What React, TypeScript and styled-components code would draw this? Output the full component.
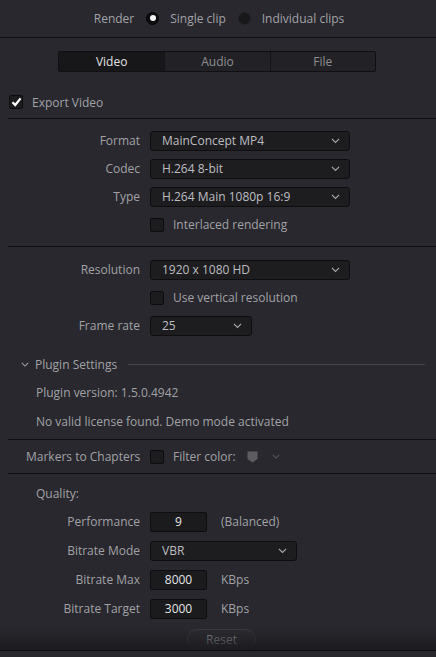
import styled, { createGlobalStyle } from "styled-components";

const GlobalStyle = createGlobalStyle`
  html, body {
    margin: 0;
    padding: 0;
    background: #28282e;
  }
  body {
    font-family: "Open Sans", "Liberation Sans", sans-serif;
    font-size: 12px;
    color: #a2a2a6;
  }
`;

const Page = styled.div`
  width: 436px;
  height: 657px;
  display: flex;
  flex-direction: column;
  overflow: hidden;
`;

const Content = styled.div`
  position: relative;
  height: 650px;
  overflow: hidden;
  display: flex;
  flex-direction: column;
`;

const Shade = styled.div`
  position: absolute;
  left: 0;
  right: 0;
  bottom: 0;
  height: 22px;
  background: linear-gradient(to bottom, rgba(24, 24, 28, 0), rgba(24, 24, 28, 0.85));
  pointer-events: none;
`;

const Footer = styled.div`
  height: 6px;
  border-top: 1px solid #0c0c0e;
  background: #27272c;
`;

const RenderBar = styled.div`
  height: 38px;
  display: flex;
  align-items: center;
  justify-content: center;
  gap: 11px;
  border-bottom: 1px solid #101012;
  padding-left: 2px;
`;

const Radio = styled.span<{ $on?: boolean }>`
  width: 13px;
  height: 13px;
  border-radius: 50%;
  box-sizing: border-box;
  background: ${(p) => (p.$on ? "#0d0d0f" : "#18181b")};
  border: 1px solid ${(p) => (p.$on ? "#050506" : "#222226")};
  display: inline-flex;
  align-items: center;
  justify-content: center;
  margin-left: 1px;
  &::after {
    content: "";
    width: 6px;
    height: 6px;
    border-radius: 50%;
    background: ${(p) => (p.$on ? "#f4f4f4" : "transparent")};
  }
`;

const Tabs = styled.div`
  margin: 13px 0 0 58px;
  width: 318px;
  height: 22px;
  box-sizing: border-box;
  display: grid;
  grid-template-columns: 1fr 1fr 1fr;
  border: 1px solid #101012;
  border-radius: 2px;
  background: #222226;
`;

const Tab = styled.div<{ $active?: boolean }>`
  display: flex;
  align-items: center;
  justify-content: center;
  background: ${(p) => (p.$active ? "#17171a" : "transparent")};
  color: ${(p) => (p.$active ? "#e2e2e4" : "#8e8e92")};
  & + & {
    border-left: 1px solid #151517;
  }
`;

const ExportRow = styled.div`
  margin: 21px 0 0 9px;
  height: 18px;
  display: flex;
  align-items: center;
  gap: 9px;
`;

const Box = styled.span`
  width: 14px;
  height: 14px;
  box-sizing: border-box;
  border: 1px solid #0c0c0d;
  border-radius: 2px;
  background: #1c1c1f;
  display: inline-flex;
  align-items: center;
  justify-content: center;
  flex-shrink: 0;
`;

const Divider = styled.div<{ $mt?: number }>`
  margin: ${(p) => p.$mt ?? 0}px 0 0 8px;
  height: 1px;
  background: #0f0f11;
`;

const FormBlock = styled.div<{ $top: number; $bottom: number; $gap?: number }>`
  display: flex;
  flex-direction: column;
  gap: ${(p) => p.$gap ?? 8}px;
  padding: ${(p) => p.$top}px 0 ${(p) => p.$bottom}px;
`;

const Row = styled.div`
  display: flex;
  align-items: center;
  height: 20px;
`;

const Label = styled.div`
  width: 140px;
  padding-right: 10px;
  text-align: right;
  flex-shrink: 0;
  white-space: nowrap;
`;

const Select = styled.div<{ $w: number }>`
  width: ${(p) => p.$w}px;
  height: 20px;
  box-sizing: border-box;
  display: flex;
  align-items: center;
  justify-content: space-between;
  padding: 0 9px 0 11px;
  background: #1d1d20;
  border: 1px solid #0e0e10;
  border-radius: 3px;
  color: #bdbdc1;
`;

const NumBox = styled.div`
  width: 57px;
  height: 20px;
  box-sizing: border-box;
  display: flex;
  align-items: center;
  justify-content: center;
  background: #1b1b1e;
  border: 1px solid #0e0e10;
  border-radius: 2px;
  color: #e4e4e6;
`;

const Unit = styled.span`
  margin-left: 14px;
`;

const CheckLine = styled.div`
  display: flex;
  align-items: center;
  gap: 9px;
  height: 20px;
  margin-left: 150px;
`;

const PluginHead = styled.div`
  margin: 19px 11px 0 21px;
  height: 20px;
  display: flex;
  align-items: center;
  gap: 6px;
  &::after {
    content: "";
    flex: 1;
    height: 1px;
    margin-left: 5px;
    background: #46464b;
  }
`;

const Note = styled.div<{ $mt: number }>`
  margin: ${(p) => p.$mt}px 0 0 36px;
  height: 20px;
  display: flex;
  align-items: center;
`;

const MarkersRow = styled.div`
  height: 34px;
  display: flex;
  align-items: center;
  padding-left: 26px;
`;

const MarkersLabel = styled.span`
  width: 124px;
`;

const FilterText = styled.span`
  margin-left: 9px;
`;

const Swatch = styled.span`
  margin-left: 11px;
  display: inline-flex;
`;

const SwatchArrow = styled.span`
  margin-left: 14px;
  display: inline-flex;
`;

const ResetButton = styled.div`
  margin: 10px 0 0 187px;
  width: 69px;
  height: 22px;
  box-sizing: border-box;
  border: 1px solid #3a3a3f;
  border-radius: 10px;
  background: #2c2c31;
  display: flex;
  align-items: center;
  justify-content: center;
  color: #8c8c90;
`;

const Chevron = ({ color = "#a9a9ad", size = 9 }: { color?: string; size?: number }) => (
  <svg width={size} height={size * 0.6} viewBox="0 0 10 6">
    <path d="M1 1 L5 5 L9 1" fill="none" stroke={color} strokeWidth="1.3" />
  </svg>
);

const Check = () => (
  <svg width="11" height="10" viewBox="0 0 11 10">
    <path d="M1.5 5.2 L4.2 8 L9.6 1.4" fill="none" stroke="#ffffff" strokeWidth="2.2" />
  </svg>
);

function Dropdown({ value, width }: { value: string; width: number }) {
  return (
    <Select $w={width}>
      <span>{value}</span>
      <Chevron />
    </Select>
  );
}

export default function App() {
  return (
    <Page>
      <GlobalStyle />
      <Content>
        <RenderBar>
          <span>Render</span>
          <Radio $on />
          <span>Single clip</span>
          <Radio />
          <span>Individual clips</span>
        </RenderBar>

        <Tabs>
          <Tab $active>Video</Tab>
          <Tab>Audio</Tab>
          <Tab>File</Tab>
        </Tabs>

        <ExportRow>
          <Box>
            <Check />
          </Box>
          <span>Export Video</span>
        </ExportRow>

        <Divider $mt={7} />

        <FormBlock $top={12} $bottom={11}>
          <Row>
            <Label>Format</Label>
            <Dropdown value="MainConcept MP4" width={200} />
          </Row>
          <Row>
            <Label>Codec</Label>
            <Dropdown value="H.264 8-bit" width={200} />
          </Row>
          <Row>
            <Label>Type</Label>
            <Dropdown value="H.264 Main 1080p 16:9" width={200} />
          </Row>
          <CheckLine>
            <Box />
            <span>Interlaced rendering</span>
          </CheckLine>
        </FormBlock>

        <Divider />

        <FormBlock $top={13} $bottom={0}>
          <Row>
            <Label>Resolution</Label>
            <Dropdown value="1920 x 1080 HD" width={200} />
          </Row>
          <CheckLine>
            <Box />
            <span>Use vertical resolution</span>
          </CheckLine>
          <Row>
            <Label>Frame rate</Label>
            <Dropdown value="25" width={102} />
          </Row>
        </FormBlock>

        <PluginHead>
          <Chevron color="#a0a0a4" size={8} />
          <span>Plugin Settings</span>
        </PluginHead>

        <Note $mt={9}>Plugin version: 1.5.0.4942</Note>
        <Note $mt={9}>No valid license found. Demo mode activated</Note>

        <Divider $mt={8} />

        <MarkersRow>
          <MarkersLabel>Markers to Chapters</MarkersLabel>
          <Box />
          <FilterText>Filter color:</FilterText>
          <Swatch>
            <svg width="11" height="12" viewBox="0 0 11 12">
              <path d="M0.5 0.5 H10.5 V8 L5.5 11.5 L0.5 8 Z" fill="#5c5c61" />
            </svg>
          </Swatch>
          <SwatchArrow>
            <Chevron color="#55555a" size={8} />
          </SwatchArrow>
        </MarkersRow>

        <Divider />

        <Note $mt={10}>Quality:</Note>

        <FormBlock $top={8} $bottom={0} $gap={9}>
          <Row>
            <Label>Performance</Label>
            <NumBox>9</NumBox>
            <Unit>(Balanced)</Unit>
          </Row>
          <Row>
            <Label>Bitrate Mode</Label>
            <Dropdown value="VBR" width={147} />
          </Row>
          <Row>
            <Label>Bitrate Max</Label>
            <NumBox>8000</NumBox>
            <Unit>KBps</Unit>
          </Row>
          <Row>
            <Label>Bitrate Target</Label>
            <NumBox>3000</NumBox>
            <Unit>KBps</Unit>
          </Row>
        </FormBlock>

        <ResetButton>Reset</ResetButton>
        <Shade />
      </Content>
      <Footer />
    </Page>
  );
}
